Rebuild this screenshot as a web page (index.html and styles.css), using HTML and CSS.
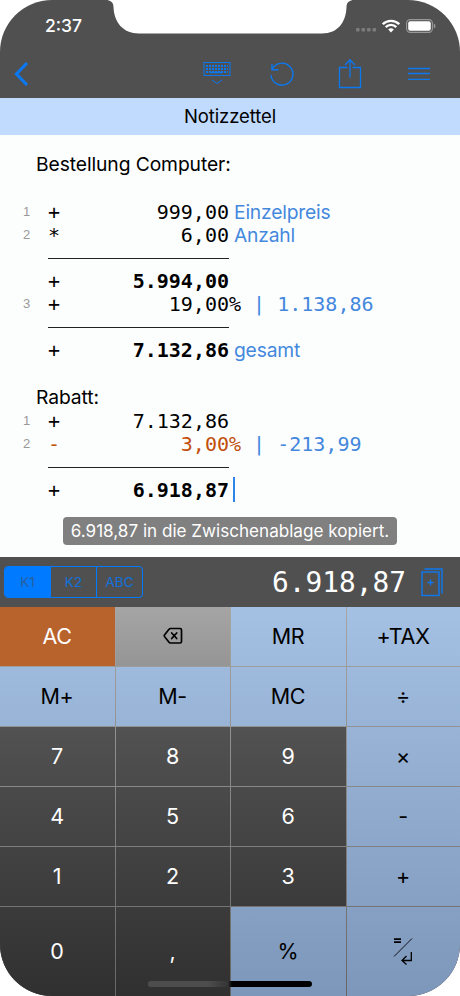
FILE: index.html
```html
<!DOCTYPE html>
<html lang="de">
<head>
    <meta charset="UTF-8">
    <meta name="viewport" content="width=device-width, initial-scale=1.0">
    <title>Notizzettel</title>
    <link rel="stylesheet" href="styles.css">
</head>
<body>
    <div class="phone">
        <svg class="notch" width="248" height="34" viewBox="0 0 248 34">
            <path d="M0 0C4 0 7.500 2 7.500 7C8 22 17 33.500 33 33.500H216C232 33.500 240 22 240.500 7C240.500 2 244 0 248 0Z" fill="#fff"/>
        </svg>
        <div class="status">
            <span class="time">2:37</span>
            <div class="signal">
                <svg width="22" height="6" viewBox="0 0 22 6" fill="#7c7c7c">
                    <rect x="1" y="1" width="3.600" height="3.600" rx="1"/>
                    <rect x="6.500" y="1" width="3.600" height="3.600" rx="1"/>
                    <rect x="12" y="1" width="3.600" height="3.600" rx="1"/>
                    <rect x="17.500" y="1" width="3.600" height="3.600" rx="1"/>
                </svg>
                <svg class="wifi" width="18" height="14" viewBox="0 0 18 14" fill="none" stroke="#fff" stroke-width="2.300">
                    <path d="M0.800 5.200A11.600 11.600 0 0 1 17.200 5.200"/>
                    <path d="M3.700 8.100A7.500 7.500 0 0 1 14.300 8.100"/>
                    <path d="M9 13.500L6.200 10.600A4 4 0 0 1 11.800 10.600Z" fill="#fff" stroke="none"/>
                </svg>
                <svg width="30" height="14" viewBox="0 0 30 14">
                    <rect x="0.600" y="0.600" width="25.800" height="12.800" rx="3.600" fill="none" stroke="#999" stroke-width="1.100"/>
                    <rect x="2.200" y="2.200" width="22.600" height="9.600" rx="2" fill="#fff"/>
                    <path d="M27.800 4.600Q29.500 5.200 29.500 7T27.800 9.400Z" fill="#999"/>
                </svg>
            </div>
        </div>
        <div class="toolbar">
            <svg class="back" width="16" height="26" viewBox="0 0 16 26">
                <path d="M14 2L3.500 13L14 24" stroke-width="3.200"/>
            </svg>
            <div class="tools">
                <svg width="28" height="32" viewBox="0 0 28 32">
                    <rect x="1" y="4.500" width="26" height="13"/>
                    <path d="M3 8H25M3 11H25M3 14H25" stroke-width="1.800" stroke-dasharray="2 1"/>
                    <path d="M8 14.500H20" stroke-width="1.500"/>
                    <path d="M9 22L14 25.500L19 22"/>
                </svg>
                <svg width="28" height="32" viewBox="0 0 28 32">
                    <path d="M4 11.500A11 11 0 1 1 3 17" stroke-width="1.400"/>
                    <path d="M4 6V11.700H10.500" stroke-width="1.400"/>
                </svg>
                <svg width="28" height="32" viewBox="0 0 28 32">
                    <path d="M11.500 9.500H3.500V29.500H24.500V9.500H16.500" stroke-width="1.300"/>
                    <path d="M14 19.500V2M9 7L14 1.700L19 7" stroke-width="1.300"/>
                </svg>
                <svg width="28" height="32" viewBox="0 0 28 32">
                    <path d="M4 10.500H26M4 15.500H26M4 21.300H26" stroke-width="1.300"/>
                </svg>
            </div>
        </div>
        <div class="title">Notizzettel</div>

        <div class="sheet">
            <div class="heading first">Bestellung Computer:</div>
            <div class="row"><span class="nr">1</span><span>+</span><span class="value">999,00</span><span class="note">Einzelpreis</span></div>
            <div class="row"><span class="nr">2</span><span>*</span><span class="value">6,00</span><span class="note">Anzahl</span></div>
            <div class="rule"></div>
            <div class="row"><span class="nr"></span><span>+</span><span class="value sum">5.994,00</span></div>
            <div class="row"><span class="nr">3</span><span>+</span><span class="value">19,00</span><span class="percent">% <i>| 1.138,86</i></span></div>
            <div class="rule"></div>
            <div class="row"><span class="nr"></span><span>+</span><span class="value sum">7.132,86</span><span class="note">gesamt</span></div>
            <div class="heading">Rabatt:</div>
            <div class="row"><span class="nr">1</span><span>+</span><span class="value">7.132,86</span></div>
            <div class="row minus"><span class="nr">2</span><span>-</span><span class="value">3,00</span><span class="percent">% <i>| -213,99</i></span></div>
            <div class="rule"></div>
            <div class="row"><span class="nr"></span><span>+</span><span class="value sum">6.918,87</span><span class="cursor"></span></div>
            <div class="toast">6.918,87 in die Zwischenablage kopiert.</div>
        </div>

        <div class="display">
            <div class="tabs">
                <span class="tab active">K1</span>
                <span class="tab">K2</span>
                <span class="tab">ABC</span>
            </div>
            <span class="result">6.918,87</span>
            <svg class="copy" width="22" height="30" viewBox="0 0 22 30">
                <rect x="1" y="5" width="17" height="23.500" stroke-width="1.400"/>
                <path d="M3.500 2H21V26.500" stroke-width="1.400"/>
                <path d="M6.500 15.500H12.500M9.500 12.500V18.500" stroke-width="1.300"/>
            </svg>
        </div>

        <div class="keypad">
            <div class="key clear">AC</div>
            <div class="key delete">
                <svg width="20" height="18" viewBox="0 0 20 18" fill="none" stroke="#000" stroke-width="1.700" stroke-linejoin="round" stroke-linecap="round">
                    <path d="M7.500 1.500H17Q18.500 1.500 18.500 3V14.500Q18.500 16 17 16H7.500Q6.500 16 6 15.300L1.500 9.500Q1 8.800 1.500 8.100L6 2.200Q6.500 1.500 7.500 1.500Z"/>
                    <path d="M8.700 6L13.700 11.500M13.700 6L8.700 11.500"/>
                </svg>
            </div>
            <div class="key blue">MR</div>
            <div class="key blue">+TAX</div>
            <div class="key blue">M+</div>
            <div class="key blue">M-</div>
            <div class="key blue">MC</div>
            <div class="key blue">÷</div>
            <div class="key">7</div>
            <div class="key">8</div>
            <div class="key">9</div>
            <div class="key blue">×</div>
            <div class="key">4</div>
            <div class="key">5</div>
            <div class="key">6</div>
            <div class="key blue">-</div>
            <div class="key">1</div>
            <div class="key">2</div>
            <div class="key">3</div>
            <div class="key blue">+</div>
            <div class="key">0</div>
            <div class="key">,</div>
            <div class="key blue">%</div>
            <div class="key blue">
                <svg width="20" height="28" viewBox="0 0 20 28" fill="none" stroke="#000">
                    <path d="M1 2.200H8M1 5.200H8" stroke-width="1.700"/>
                    <path d="M1 19.500L19 1.500" stroke-width="0.900"/>
                    <path d="M18.300 15V23.500H9.500M13.500 19L9 23.500L13.500 27.500" stroke-width="1.300"/>
                </svg>
            </div>
        </div>
        <div class="home-bar"></div>
    </div>
</body>
</html>
```
FILE: styles.css
```css
body {
    margin: 0;
    background-color: #ffffff;
    font-family: Inter, "Liberation Sans", sans-serif;
}
.phone {
    position: relative;
    display: flex;
    flex-direction: column;
    width: 460px;
    height: 996px;
    overflow: hidden;
    border-radius: 52px;
    background-color: #505051;
}
.notch {
    position: absolute;
    top: 0;
    left: 106px;
}
.status {
    display: flex;
    justify-content: space-between;
    height: 50px;
    box-sizing: border-box;
    padding: 15px 24px 0 45px;
}
.time {
    color: #ffffff;
    font-size: 17.500px;
    font-weight: 500;
    line-height: 22px;
}
.signal {
    display: flex;
    height: 21px;
    align-items: center;
}
.signal svg:first-child {
    margin: 9px 5px 0 0;
}
.wifi {
    margin-right: 6px;
}
.toolbar {
    display: flex;
    justify-content: space-between;
    align-items: center;
    height: 48px;
    padding: 0 28px 0 13px;
}
.toolbar svg,
.copy {
    fill: none;
    stroke: #0b78f0;
}
.tools {
    display: flex;
    gap: 40px;
}
.tools svg:nth-child(2) {
    margin-left: -3px;
}
.title {
    height: 37px;
    line-height: 37px;
    text-align: center;
    font-size: 18.500px;
    letter-spacing: -0.1px;
    background-color: #c0dbfd;
}
.sheet {
    position: relative;
    height: 422px;
    background-color: #fcfefe;
}
.heading {
    margin-top: 24px;
    padding-left: 36px;
    font-size: 19.300px;
    line-height: 24px;
    letter-spacing: -0.1px;
}
.heading.first {
    margin: 0;
    padding-top: 17px;
    margin-bottom: 24px;
}
.row {
    display: grid;
    grid-template-columns: 36px 24px 169px auto;
    justify-content: start;
    height: 23.400px;
    line-height: 24.400px;
    font-family: "DejaVu Sans Mono", monospace;
    font-size: 20px;
}
.nr {
    padding-left: 23px;
    font-family: "Liberation Sans", sans-serif;
    font-size: 13px;
    color: #999999;
}
.row > span:nth-child(2) {
    padding-left: 12px;
}
.value {
    text-align: right;
}
.sum {
    font-weight: bold;
}
.note {
    padding-left: 5px;
    font-family: Inter, sans-serif;
    font-size: 19.300px;
    letter-spacing: -0.2px;
    color: #4488dd;
}
.percent {
    white-space: pre;
}
.percent i {
    font-style: normal;
    color: #4488dd;
}
.minus {
    color: #c24e0c;
}
.rule {
    width: 181px;
    height: 1px;
    margin: 11px 0 10px 48px;
    background-color: #222222;
}
.cursor {
    width: 2px;
    height: 25px;
    margin: -1px 0 0 4px;
    background-color: #2b86e8;
}
.toast {
    position: absolute;
    top: 382px;
    left: 63px;
    width: 334px;
    height: 28px;
    line-height: 28px;
    border-radius: 4px;
    text-align: center;
    white-space: nowrap;
    font-size: 17.100px;
    background-color: #808080;
    color: #ffffff;
}
.display {
    display: flex;
    align-items: center;
    height: 50px;
    padding: 0 17px 0 4px;
}
.tabs {
    display: flex;
    border: 1px solid #007aff;
    border-radius: 4px;
    overflow: hidden;
}
.tab {
    width: 45px;
    height: 30px;
    line-height: 30px;
    text-align: center;
    font-size: 13.500px;
    color: #1070dc;
}
.tab + .tab {
    border-left: 1px solid #007aff;
}
.tab.active {
    background-color: #007aff;
    color: #2860a0;
}
.result {
    margin-left: auto;
    margin-right: 15px;
    font-family: "DejaVu Sans Mono", monospace;
    font-size: 27.800px;
    color: #ffffff;
}
.keypad {
    display: grid;
    grid-template-columns: 115px 114px 115px 1fr;
    grid-template-rows: repeat(5, 59px) 89px;
    gap: 1px;
    height: 389px;
    background: linear-gradient(#a6a6a6, #666666);
}
/* fixed backgrounds so that one gradient runs over the whole keypad */
.key {
    display: flex;
    align-items: center;
    justify-content: center;
    padding: 0 1px 1px 0;
    font-size: 21.500px;
    letter-spacing: -0.3px;
    color: #ffffff;
    background: linear-gradient(#555555 700px, #303030 996px) fixed;
}
.key.blue {
    color: #000000;
    background: linear-gradient(#a4c0e3 607px, #7d97ba 996px) fixed;
}
.key.clear {
    background: #b9632c;
}
.key.delete {
    background: linear-gradient(#a5a5a5, #959595);
}
.home-bar {
    position: absolute;
    left: 148px;
    bottom: 9px;
    width: 164px;
    height: 6px;
    border-radius: 3px;
    background: linear-gradient(to right, #4d4d4d 60px, #343434 80px, #000000 84px);
}
```
